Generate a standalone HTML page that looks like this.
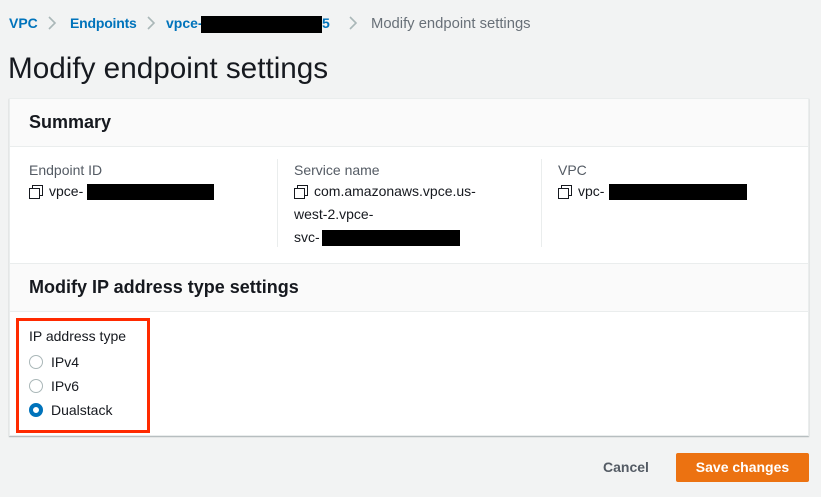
<!DOCTYPE html>
<html><head><meta charset="utf-8"><style>
*{margin:0;padding:0;box-sizing:border-box}
body{width:821px;height:497px;background:#f2f3f3;font-family:"Liberation Sans",Arial,sans-serif;position:relative;overflow:hidden;color:#16191f}
.a{position:absolute;white-space:nowrap}
.bc{top:15px;font-size:14px;color:#0073bb;font-weight:bold}
.sep{position:absolute;top:16px}
.lbl{font-size:14px;color:#545b64}
.val{font-size:14px;color:#16191f}
.blk{position:absolute;background:#000;height:16px}
.cp{display:inline-block;width:12px;height:12px;position:relative;vertical-align:-1px;margin-right:8px}
.cp:before{content:"";position:absolute;left:3px;top:0;width:9px;height:9px;border:1.5px solid #16191f}
.cp:after{content:"";position:absolute;left:0;top:3px;width:9px;height:9px;border:1.5px solid #16191f;background:#fff}
.rad{position:absolute;width:14px;height:14px;border-radius:50%;border:1.5px solid #aab7b8;background:#fff}
</style></head><body>
<div class="a bc" style="left:9px">VPC</div>
<svg class="sep" style="left:47px" width="10" height="14" viewBox="0 0 10 14"><path d="M2 1l6 6-6 6" fill="none" stroke="#aab7b8" stroke-width="1.6"/></svg>
<div class="a bc" style="left:70px;letter-spacing:-0.2px">Endpoints</div>
<svg class="sep" style="left:146px" width="10" height="14" viewBox="0 0 10 14"><path d="M2 1l6 6-6 6" fill="none" stroke="#aab7b8" stroke-width="1.6"/></svg>
<div class="a bc" style="left:166px">vpce-</div>
<div class="blk" style="left:201px;top:16px;width:121px;height:17px"></div>
<div class="a bc" style="left:322px">5</div>
<svg class="sep" style="left:348px" width="10" height="14" viewBox="0 0 10 14"><path d="M2 1l6 6-6 6" fill="none" stroke="#aab7b8" stroke-width="1.6"/></svg>
<div class="a" style="left:371px;top:16px;font-size:14.8px;color:#687078">Modify endpoint settings</div>
<div class="a" style="left:8px;top:52px;font-size:29.7px;color:#16191f">Modify endpoint settings</div>

<div class="a" style="left:9px;top:98px;width:800px;height:338px;background:#fff;border:1px solid #eaeded;box-shadow:0 1px 1px rgba(0,28,36,.3)"></div>
<div class="a" style="left:10px;top:99px;width:798px;height:48px;background:#fafafa;border-bottom:1px solid #eaeded"></div>
<div class="a" style="left:29px;top:112px;font-size:18px;font-weight:bold">Summary</div>

<div class="a lbl" style="left:29px;top:162px">Endpoint ID</div>
<div class="a val" style="left:29px;top:183px"><span class="cp"></span>vpce-</div>
<div class="blk" style="left:87px;top:184px;width:127px"></div>
<div class="a" style="left:277px;top:159px;width:1px;height:88px;background:#eaeded"></div>
<div class="a lbl" style="left:294px;top:162px">Service name</div>
<div class="a val" style="left:294px;top:183px"><span class="cp"></span>com.amazonaws.vpce.us-</div>
<div class="a val" style="left:294px;top:206px">west-2.vpce-</div>
<div class="a val" style="left:294px;top:229px">svc-</div>
<div class="blk" style="left:322px;top:230px;width:138px"></div>
<div class="a" style="left:541px;top:159px;width:1px;height:88px;background:#eaeded"></div>
<div class="a lbl" style="left:558px;top:162px">VPC</div>
<div class="a val" style="left:558px;top:183px"><span class="cp"></span>vpc-</div>
<div class="blk" style="left:609px;top:184px;width:138px"></div>

<div class="a" style="left:10px;top:263px;width:798px;height:49px;background:#fafafa;border-top:1px solid #eaeded;border-bottom:1px solid #eaeded"></div>
<div class="a" style="left:29px;top:277px;font-size:18px;font-weight:bold">Modify IP address type settings</div>

<div class="a" style="left:16px;top:318px;width:134px;height:115px;border:3px solid #ff2a00"></div>
<div class="a val" style="left:29px;top:328px">IP address type</div>
<div class="rad" style="left:29px;top:355px"></div>
<div class="a val" style="left:51px;top:354px">IPv4</div>
<div class="rad" style="left:29px;top:379px"></div>
<div class="a val" style="left:51px;top:378px">IPv6</div>
<div class="rad" style="left:29px;top:403px;border:4px solid #0073bb"></div>
<div class="a val" style="left:51px;top:402px">Dualstack</div>

<div class="a" style="left:603px;top:459px;font-size:14px;font-weight:bold;color:#545b64">Cancel</div>
<div class="a" style="left:676px;top:453px;width:133px;height:29px;background:#ec7211;border-radius:2px;color:#fff;font-size:14px;font-weight:bold;text-align:center;line-height:29px">Save changes</div>
</body></html>
